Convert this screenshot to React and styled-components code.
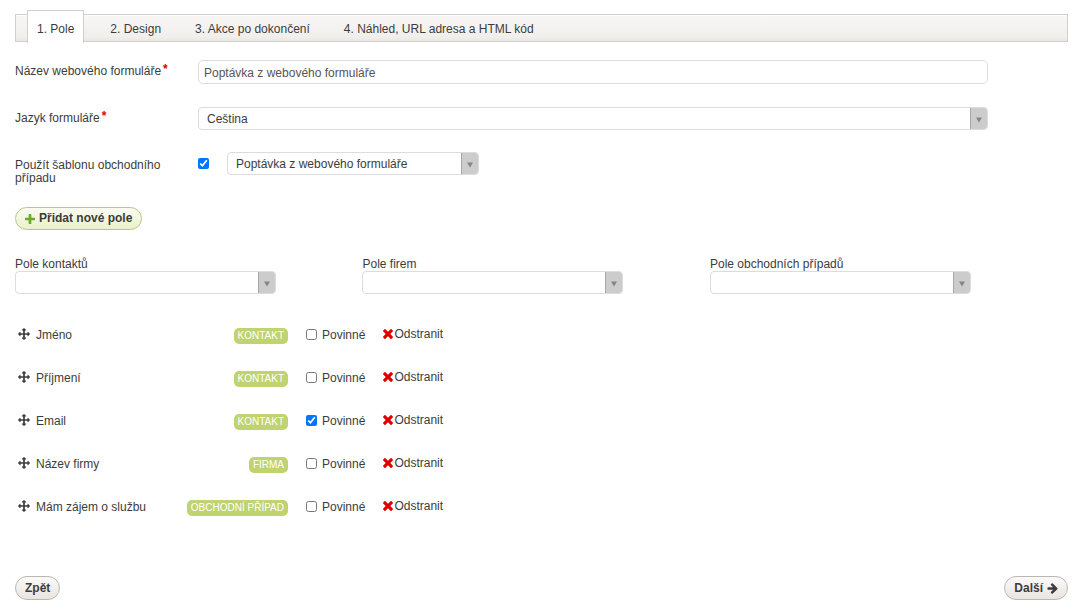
import React from 'react';
import styled, { createGlobalStyle, css } from 'styled-components';

const GlobalStyle = createGlobalStyle`
  *, *::before, *::after { box-sizing: border-box; }
  body {
    margin: 0;
    background: #fff;
    color: #3c3c3c;
    font-family: "Liberation Sans", Arial, sans-serif;
    font-size: 12px;
    line-height: 13px;
  }
  input, select, button { font: inherit; color: inherit; }
`;

const Page = styled.main`
  padding: 14px 12px 16px 15px;
`;

const Tabs = styled.nav`
  display: flex;
  gap: 16px;
  padding-left: 11px;
  border: 1px solid #d3cec8;
  background: linear-gradient(#f9f7f6, #f1efec 85%, #e9e7e3);
  box-shadow: inset 0 1px 0 #fff;
`;

const Tab = styled.a`
  padding: 2px 9px 0;
  line-height: 24px;
  color: #3c3c3c;
  text-decoration: none;
  white-space: nowrap;

  ${(p) =>
    p.$active &&
    css`
      margin: -5px 1px -2px 0;
      padding: 6px 9px 2px;
      border: 1px solid #d3cec8;
      border-bottom: 0;
      background: #fff;
    `}
`;

const Form = styled.form`
  margin-top: 18px;
`;

const FormRow = styled.div`
  display: grid;
  grid-template-columns: 183px minmax(0, 75%);
  align-items: start;
  margin-bottom: 22px;
`;

const Label = styled.label`
  padding: ${(p) => (p.$multiline ? '7px' : '5px')} 20px 0 0;
`;

const Required = styled.span`
  margin-left: 2px;
  color: #e00000;
  font-weight: bold;
  line-height: 0;
  vertical-align: 2px;
`;

const TextInput = styled.input`
  width: 100%;
  height: 24px;
  margin: 0 0 1px;
  padding: 2px 5px 0;
  border: 1px solid #dcdcdc;
  border-radius: 5px;
  background: #fff;
  color: #555;
`;

const Inline = styled.div`
  display: flex;
  align-items: center;
  gap: 18px;
`;

const Checkbox = styled.input`
  flex: none;
  width: 11px;
  height: 11px;
  margin: 0;
`;

const SelectBox = styled.div`
  position: relative;
  width: ${(p) => p.$width || '100%'};

  select {
    display: block;
    width: 100%;
    height: 23px;
    margin: 0;
    padding: 2px 24px 0 8px;
    border: 1px solid #dcdcdc;
    border-radius: 4px;
    background: #fff;
    appearance: none;
  }
`;

const SelectArrow = styled.span`
  position: absolute;
  inset: 1px 1px 1px auto;
  display: flex;
  align-items: center;
  justify-content: center;
  width: 17px;
  padding-top: 2px;
  border-left: 1px solid #a8a8a8;
  border-radius: 0 3px 3px 0;
  background: #ccc;
  color: #858585;
  pointer-events: none;
`;

const PillButton = styled.button`
  display: inline-flex;
  align-items: center;
  gap: 4px;
  height: ${(p) => (p.$green ? '23px' : '24px')};
  padding: 0 9px;
  border: 1px solid ${(p) => (p.$green ? '#bac58c' : '#bbb7b3')};
  border-radius: 12px;
  background: ${(p) =>
    p.$green ? 'linear-gradient(#fafcf1, #e9f1cb)' : 'linear-gradient(#fbfaf9, #e9e5e0)'};
  font-weight: bold;
  white-space: nowrap;
`;

const Pickers = styled.div`
  display: grid;
  grid-template-columns: repeat(3, 33%);
  margin-top: 27px;
`;

const Picker = styled.div`
  label {
    display: block;
    padding-top: 1px;
  }
`;

const FieldList = styled.ul`
  margin: 20px 0 47px;
  padding: 0;
  list-style: none;
`;

const FieldRow = styled.li`
  display: flex;
  align-items: center;
  gap: 18px;
  height: 43px;
`;

const FieldName = styled.div`
  display: flex;
  align-items: center;
  gap: 6px;
  width: 273px;
  padding-left: 3px;

  svg { margin-bottom: 4px; }
`;

const Badge = styled.span`
  margin-left: auto;
  padding: 0 4px;
  border-radius: 5px;
  background: #bfd370;
  color: #fff;
  font-size: 10px;
  line-height: 16px;
  text-transform: uppercase;
`;

const CheckLabel = styled.label`
  display: flex;
  align-items: center;
  gap: 5px;

  input { margin-bottom: 2px; }
`;

const RemoveButton = styled.button`
  display: flex;
  align-items: center;
  gap: 1px;
  padding: 0 0 2px;
  border: 0;
  background: none;

  svg {
    margin-bottom: 2px;
    color: #e00000;
  }
`;

const Footer = styled.footer`
  display: flex;
  justify-content: space-between;
`;

const ICONS = {
  move: {
    box: '0 0 1792 1792',
    d: 'M1792 896q0 26-19 45l-256 256q-19 19-45 19t-45-19-19-45v-128h-384v384h128q26 0 45 19t19 45-19 45l-256 256q-19 19-45 19t-45-19l-256-256q-19-19-19-45t19-45 45-19h128v-384h-384v128q0 26-19 45t-45 19-45-19l-256-256q-19-19-19-45t19-45l256-256q19-19 45-19t45 19 19 45v128h384v-384h-128q-26 0-45-19t-19-45 19-45l256-256q19-19 45-19t45 19l256 256q19 19 19 45t-19 45-45 19h-128v384h384v-128q0-26 19-45t45-19 45 19l256 256q19 19 19 45z',
  },
  times: {
    box: '302 366 1188 1188',
    d: 'M1490 1322q0 40-28 68l-136 136q-28 28-68 28t-68-28l-294-294-294 294q-28 28-68 28t-68-28l-136-136q-28-28-28-68t28-68l294-294-294-294q-28-28-28-68t28-68l136-136q28-28 68-28t68 28l294 294 294-294q28-28 68-28t68 28l136 136q28 28 28 68t-28 68l-294 294 294 294q28 28 28 68z',
  },
  plus: {
    box: '192 128 1408 1408',
    d: 'M1600 736v192q0 40-28 68t-68 28h-416v416q0 40-28 68t-68 28h-192q-40 0-68-28t-28-68v-416h-416q-40 0-68-28t-28-68v-192q0-40 28-68t68-28h416v-416q0-40 28-68t68-28h192q40 0 68 28t28 68v416h416q40 0 68 28t28 68z',
  },
  next: {
    box: '64 160 1600 1600',
    d: 'M1600 960q0 54-37 91l-651 651q-39 37-91 37-51 0-90-37l-75-75q-38-38-38-91t38-91l293-293h-704q-52 0-84.5-37.5t-32.5-90.5v-128q0-53 32.5-90.5t84.5-37.5h704l-293-294q-38-36-38-90t38-90l75-75q38-38 90-38 53 0 91 38l651 651q37 35 37 90z',
  },
  down: { box: '0 0 6 5', d: 'M0 0h6L3 5z' },
};

function Icon({ name, size, color }) {
  const { box, d } = ICONS[name];
  return (
    <svg width={size} height={size} viewBox={box} fill={color || 'currentColor'} aria-hidden="true">
      <path d={d} />
    </svg>
  );
}

function Select({ id, value = '', width, label }) {
  return (
    <SelectBox $width={width}>
      <select id={id} defaultValue={value} aria-label={label}>
        <option value={value}>{value}</option>
      </select>
      <SelectArrow>
        <Icon name="down" size={6} />
      </SelectArrow>
    </SelectBox>
  );
}

const TABS = ['1. Pole', '2. Design', '3. Akce po dokončení', '4. Náhled, URL adresa a HTML kód'];

const PICKERS = [
  { id: 'contact-fields', label: 'Pole kontaktů' },
  { id: 'company-fields', label: 'Pole firem' },
  { id: 'deal-fields', label: 'Pole obchodních případů' },
];

const FIELDS = [
  { name: 'Jméno', badge: 'Kontakt' },
  { name: 'Příjmení', badge: 'Kontakt' },
  { name: 'Email', badge: 'Kontakt', required: true },
  { name: 'Název firmy', badge: 'Firma' },
  { name: 'Mám zájem o službu', badge: 'Obchodní případ' },
];

export default function App() {
  return (
    <>
      <GlobalStyle />
      <Page>
        <Tabs>
          {TABS.map((tab, i) => (
            <Tab key={tab} href="#" $active={i === 0}>
              {tab}
            </Tab>
          ))}
        </Tabs>

        <Form onSubmit={(e) => e.preventDefault()}>
          <FormRow>
            <Label htmlFor="form-name">
              Název webového formuláře<Required>*</Required>
            </Label>
            <TextInput id="form-name" type="text" defaultValue="Poptávka z webového formuláře" />
          </FormRow>
          <FormRow>
            <Label htmlFor="form-language">
              Jazyk formuláře<Required>*</Required>
            </Label>
            <Select id="form-language" value="Čeština" />
          </FormRow>
          <FormRow>
            <Label htmlFor="use-template" $multiline>
              Použít šablonu obchodního případu
            </Label>
            <Inline>
              <Checkbox id="use-template" type="checkbox" defaultChecked />
              <Select
                id="template"
                label="Šablona obchodního případu"
                value="Poptávka z webového formuláře"
                width="252px"
              />
            </Inline>
          </FormRow>

          <PillButton type="button" $green>
            <Icon name="plus" size={10} color="#6aaa2e" />
            Přidat nové pole
          </PillButton>

          <Pickers>
            {PICKERS.map(({ id, label }) => (
              <Picker key={id}>
                <label htmlFor={id}>{label}</label>
                <Select id={id} width="75%" />
              </Picker>
            ))}
          </Pickers>

          <FieldList>
            {FIELDS.map(({ name, badge, required }) => (
              <FieldRow key={name}>
                <FieldName>
                  <Icon name="move" size={12} />
                  <span>{name}</span>
                  <Badge>{badge}</Badge>
                </FieldName>
                <CheckLabel>
                  <Checkbox type="checkbox" defaultChecked={required} />
                  Povinné
                </CheckLabel>
                <RemoveButton type="button">
                  <Icon name="times" size={10} />
                  Odstranit
                </RemoveButton>
              </FieldRow>
            ))}
          </FieldList>

          <Footer>
            <PillButton type="button">Zpět</PillButton>
            <PillButton type="submit">
              Další
              <Icon name="next" size={11} />
            </PillButton>
          </Footer>
        </Form>
      </Page>
    </>
  );
}
